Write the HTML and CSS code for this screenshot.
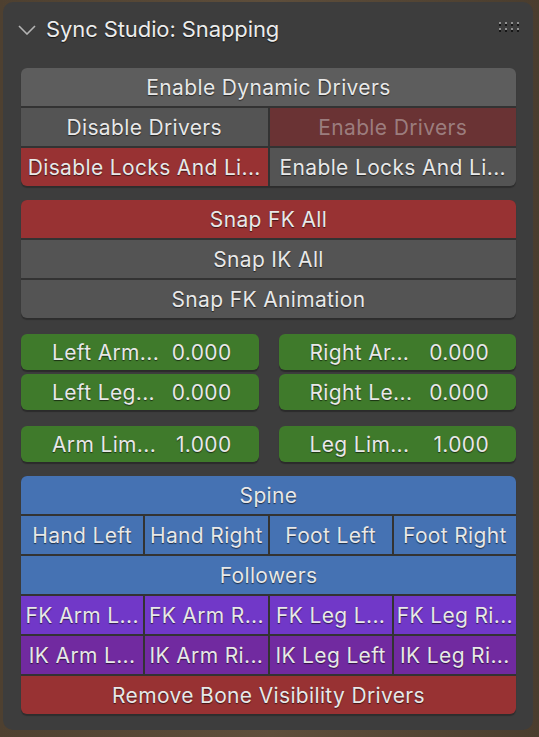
FILE: index.html
```html
<!DOCTYPE html>
<html>
<head>
<meta charset="utf-8">
<link rel="stylesheet" href="styles.css">
</head>
<body>
<div class="panel">
  <div class="header">
    <svg class="chevron" width="18" height="10" viewBox="0 0 18 10"><path d="M1 1 L9 9 L17 1" fill="none" stroke="#b4b4b4" stroke-width="1.6"/></svg>
    <span class="title">Sync Studio: Snapping</span>
    <svg class="grip" width="21" height="11" viewBox="0 0 21 11">
      <g fill="#8f8f8f">
        <rect x="0" y="0" width="2" height="2"/><rect x="6" y="0" width="2" height="2"/><rect x="12" y="0" width="2" height="2"/><rect x="18" y="0" width="2" height="2"/>
        <rect x="0" y="6" width="2" height="2"/><rect x="6" y="6" width="2" height="2"/><rect x="12" y="6" width="2" height="2"/><rect x="18" y="6" width="2" height="2"/>
      </g>
      <g fill="#161616">
        <rect x="0" y="2" width="2" height="2"/><rect x="6" y="2" width="2" height="2"/><rect x="12" y="2" width="2" height="2"/><rect x="18" y="2" width="2" height="2"/>
        <rect x="0" y="8" width="2" height="2"/><rect x="6" y="8" width="2" height="2"/><rect x="12" y="8" width="2" height="2"/><rect x="18" y="8" width="2" height="2"/>
      </g>
    </svg>
  </div>
  <div class="content">
    <div class="box cols2">
      <div class="btn grey-hi span2">Enable Dynamic Drivers</div>
      <div class="btn grey">Disable Drivers</div>
      <div class="btn red-dim">Enable Drivers</div>
      <div class="btn red">Disable Locks And Li...</div>
      <div class="btn grey">Enable Locks And Li...</div>
    </div>
    <div class="box cols1 mt14">
      <div class="btn red">Snap FK All</div>
      <div class="btn grey">Snap IK All</div>
      <div class="btn grey">Snap FK Animation</div>
    </div>
    <div class="sliders mt16">
      <div class="slider"><span>Left Arm...</span><span>0.000</span></div>
      <div class="slider"><span>Right Ar...</span><span>0.000</span></div>
      <div class="slider"><span>Left Leg...</span><span>0.000</span></div>
      <div class="slider"><span>Right Le...</span><span>0.000</span></div>
    </div>
    <div class="sliders mt16">
      <div class="slider"><span>Arm Lim...</span><span>1.000</span></div>
      <div class="slider"><span>Leg Lim...</span><span>1.000</span></div>
    </div>
    <div class="box cols4 mt14">
      <div class="btn blue span4">Spine</div>
      <div class="btn blue">Hand Left</div>
      <div class="btn blue">Hand Right</div>
      <div class="btn blue">Foot Left</div>
      <div class="btn blue">Foot Right</div>
      <div class="btn blue span4">Followers</div>
      <div class="btn purple">FK Arm L...</div>
      <div class="btn purple">FK Arm R...</div>
      <div class="btn purple">FK Leg L...</div>
      <div class="btn purple">FK Leg Ri...</div>
      <div class="btn purple2">IK Arm L...</div>
      <div class="btn purple2">IK Arm Ri...</div>
      <div class="btn purple2">IK Leg Left</div>
      <div class="btn purple2">IK Leg Ri...</div>
      <div class="btn red span4">Remove Bone Visibility Drivers</div>
    </div>
  </div>
</div>
</body>
</html>
```
FILE: styles.css
```css
html, body {
  margin: 0;
  padding: 0;
}
body {
  width: 539px;
  height: 737px;
  overflow: hidden;
  background: linear-gradient(90deg, #4e4030 0%, #5e4e3b 50%, #4a3d2e 100%);
  font-family: "Inter", "Noto Sans", sans-serif;
  color: #e8e8e8;
}
.panel {
  margin: 2px 6px 0 3px;
  height: 728px;
  box-sizing: border-box;
  background: #3d3d3d;
  border-radius: 10px;
  display: flex;
  flex-direction: column;
}
.header {
  height: 54px;
  display: flex;
  align-items: center;
  padding: 0 13px 0 15px;
}
.chevron {
  margin-top: 2px;
}
.title {
  margin-left: 10px;
  font-size: 22px;
  letter-spacing: -0.1px;
  color: #ececec;
  text-shadow: 0 1px 1px rgba(0,0,0,0.7);
}
.grip {
  margin-left: auto;
  margin-top: -3px;
}
.content {
  padding: 12px 17px 16px 18px;
  display: flex;
  flex-direction: column;
}
.mt14 { margin-top: 14px; }
.mt16 { margin-top: 16px; }
.box {
  display: grid;
  gap: 2px;
  background: #333333;
  border-radius: 6px;
  overflow: hidden;
  box-shadow: 0 2px 1px rgba(0,0,0,0.25);
}
.cols1 { grid-template-columns: 1fr; }
.cols2 { grid-template-columns: 1fr 1fr; }
.cols4 { grid-template-columns: repeat(4, 1fr); }
.span2 { grid-column: span 2; }
.span4 { grid-column: span 4; }
.btn {
  height: 38px;
  display: flex;
  align-items: center;
  justify-content: center;
  font-size: 21px;
  letter-spacing: 0.35px;
  white-space: nowrap;
  overflow: hidden;
  text-shadow: 0 1px 1px rgba(0,0,0,0.6);
}
.grey-hi { background: #5d5d5d; }
.grey { background: #545454; }
.red { background: #983233; }
.red-dim { background: #6a3334; color: rgba(220,220,220,0.45); text-shadow: none; }
.blue { background: #4572b3; }
.purple { background: #7138c8; }
.purple2 { background: #712aa0; }
.sliders {
  display: grid;
  grid-template-columns: 1fr 1fr;
  column-gap: 20px;
  row-gap: 4px;
}
.slider {
  height: 36px;
  background: #3f7a2b;
  border-radius: 6px;
  box-shadow: 0 2px 1px rgba(0,0,0,0.3);
  display: flex;
  align-items: center;
  justify-content: space-between;
  padding: 0 27px 0 31px;
  font-size: 21px;
  letter-spacing: 0.35px;
  white-space: nowrap;
  text-shadow: 0 1px 1px rgba(0,0,0,0.6);
}
```
